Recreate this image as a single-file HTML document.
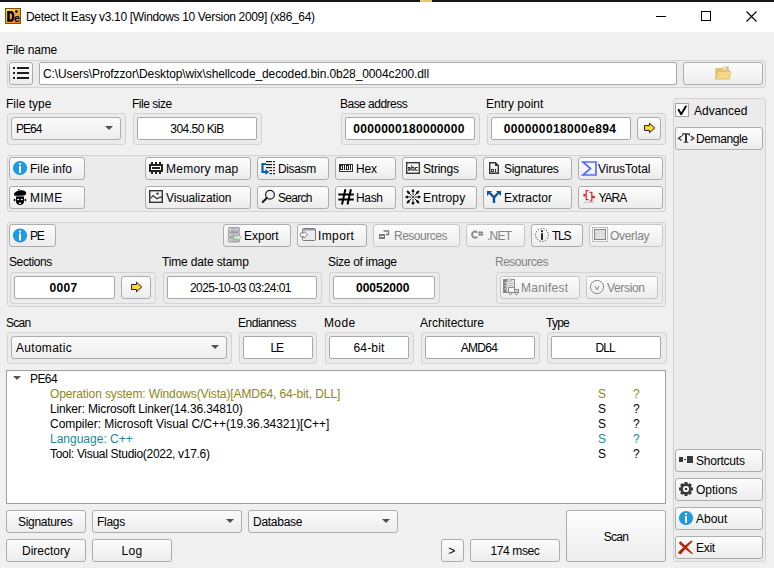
<!DOCTYPE html>
<html><head><meta charset="utf-8">
<style>
*{box-sizing:border-box;margin:0;padding:0}
html,body{width:774px;height:568px;overflow:hidden;background:#f0f0f0;font-family:"Liberation Sans",sans-serif;font-size:12px;color:#000}
.a{position:absolute}
.t{position:absolute;white-space:nowrap;line-height:14px}
.g{position:absolute;border:1px solid #d3d3d3;background:#ebebeb;border-radius:3px}
.b{position:absolute;border:1px solid #adadad;border-radius:3px;background:linear-gradient(#fdfdfd,#ececec);display:flex;align-items:center;white-space:nowrap;line-height:14px}
.c{justify-content:center}
.i{position:absolute;border:1px solid #a8a8a8;border-radius:2px;background:#fff;display:flex;align-items:center;justify-content:center;white-space:nowrap;line-height:14px}
.bold{font-weight:bold}
.dis{color:#838383}
.b.dis{border-color:#c6c6c6}
.cb{position:absolute;border:1px solid #adadad;border-radius:3px;background:linear-gradient(#fbfbfb,#ededed);display:flex;align-items:center;white-space:nowrap;line-height:14px;padding-left:4px}
.cb:after{content:"";position:absolute;right:7px;top:8px;border-left:4px solid transparent;border-right:4px solid transparent;border-top:4px solid #505050}
svg{position:absolute}
</style></head><body>
<!-- title bar -->
<div class="a" style="left:0;top:0;width:774px;height:32px;background:#fff"></div>
<div class="a" style="left:0;top:0;width:774px;height:2px;background:#161616"></div>
<div class="a" style="left:420px;top:0;width:12px;height:2px;background:#e6c868"></div>
<div class="a" style="left:5px;top:8px;width:16px;height:16px;background:linear-gradient(#f7c531,#e9862a);border:1px solid #8a5a10"></div>
<div class="t" style="left:26px;top:10px;font-size:12px;letter-spacing:-0.33px">Detect It Easy v3.10 [Windows 10 Version 2009] (x86_64)</div>
<div class="a" style="left:656px;top:16px;width:10px;height:1px;background:#000"></div>
<div class="a" style="left:701px;top:11px;width:10px;height:10px;border:1px solid #000"></div>

<!-- file name -->
<div class="t" style="left:6px;top:43px;letter-spacing:-0.19px">File name</div>
<div class="g" style="left:7px;top:60px;width:759px;height:28px"></div>
<div class="b" style="left:9px;top:62px;width:24px;height:23px"></div>
<div class="i" style="left:39px;top:62px;width:638px;height:23px;justify-content:flex-start;padding-left:3px;letter-spacing:-0.11px">C:\Users\Profzzor\Desktop\wix\shellcode_decoded.bin.0b28_0004c200.dll</div>
<div class="b" style="left:683px;top:62px;width:80px;height:23px"></div>

<!-- row 2 -->
<div class="t" style="left:6px;top:97px">File type</div>
<div class="t" style="left:132px;top:97px;letter-spacing:-0.47px">File size</div>
<div class="t" style="left:340px;top:97px;letter-spacing:-0.52px">Base address</div>
<div class="t" style="left:486px;top:97px">Entry point</div>
<div class="g" style="left:7px;top:113px;width:119px;height:32px"></div>
<div class="cb" style="left:11px;top:117px;width:110px;height:23px;letter-spacing:-1.0px">PE64</div>
<div class="g" style="left:133px;top:113px;width:129px;height:32px"></div>
<div class="i" style="left:137px;top:117px;width:120px;height:23px;letter-spacing:-0.52px">304.50 KiB</div>
<div class="g" style="left:341px;top:113px;width:139px;height:32px"></div>
<div class="i bold" style="left:345px;top:117px;width:130px;height:23px;letter-spacing:0.29px;padding-right:2px">0000000180000000</div>
<div class="g" style="left:487px;top:113px;width:179px;height:32px"></div>
<div class="i bold" style="left:491px;top:117px;width:140px;height:23px;letter-spacing:0.37px;padding-right:2px">000000018000e894</div>
<div class="b" style="left:637px;top:117px;width:24px;height:23px"></div>

<!-- right panel -->
<div class="g" style="left:673px;top:98px;width:93px;height:464px"></div>
<div class="a" style="left:675px;top:103px;width:14px;height:14px;background:#fff;border:1px solid #a4a4a4"></div>
<div class="t" style="left:694px;top:104px">Advanced</div>
<div class="b" style="left:675px;top:127px;width:88px;height:23px;padding-left:20px;letter-spacing:-0.38px">Demangle</div>
<div class="b" style="left:675px;top:449px;width:88px;height:23px;padding-left:20px;letter-spacing:-0.22px">Shortcuts</div>
<div class="b" style="left:675px;top:478px;width:88px;height:23px;padding-left:20px">Options</div>
<div class="b" style="left:675px;top:507px;width:88px;height:23px;padding-left:20px">About</div>
<div class="b" style="left:675px;top:536px;width:88px;height:23px;padding-left:20px;letter-spacing:-0.27px">Exit</div>

<!-- buttons group -->
<div class="g" style="left:7px;top:155px;width:659px;height:57px"></div>
<div class="b" style="left:9px;top:157px;width:76px;height:23px;padding-left:20px">File info</div>
<div class="b" style="left:9px;top:186px;width:76px;height:23px;padding-left:20px;letter-spacing:0.27px">MIME</div>
<div class="b" style="left:145px;top:157px;width:106px;height:23px;padding-left:20px;letter-spacing:0.25px">Memory map</div>
<div class="b" style="left:145px;top:186px;width:106px;height:23px;padding-left:20px;letter-spacing:-0.15px">Visualization</div>
<div class="b" style="left:257px;top:157px;width:72px;height:23px;padding-left:20px;letter-spacing:-0.36px">Disasm</div>
<div class="b" style="left:257px;top:186px;width:72px;height:23px;padding-left:20px;letter-spacing:-0.72px">Search</div>
<div class="b" style="left:335px;top:157px;width:61px;height:23px;padding-left:20px;letter-spacing:-0.2px">Hex</div>
<div class="b" style="left:335px;top:186px;width:61px;height:23px;padding-left:20px;letter-spacing:-0.33px">Hash</div>
<div class="b" style="left:402px;top:157px;width:75px;height:23px;padding-left:20px;letter-spacing:-0.23px">Strings</div>
<div class="b" style="left:402px;top:186px;width:75px;height:23px;padding-left:20px;letter-spacing:0.13px">Entropy</div>
<div class="b" style="left:483px;top:157px;width:89px;height:23px;padding-left:20px;letter-spacing:-0.29px">Signatures</div>
<div class="b" style="left:483px;top:186px;width:89px;height:23px;padding-left:20px">Extractor</div>
<div class="b" style="left:578px;top:157px;width:85px;height:23px;padding-left:20px;padding-left:19px">VirusTotal</div>
<div class="b" style="left:578px;top:186px;width:85px;height:23px;padding-left:20px;letter-spacing:-1.0px;padding-left:19.5px">YARA</div>

<!-- PE group -->
<div class="g" style="left:7px;top:222px;width:659px;height:85px"></div>
<div class="b" style="left:9px;top:224px;width:47px;height:23px;padding-left:20px;letter-spacing:-1.2px">PE</div>
<div class="b" style="left:223px;top:224px;width:68px;height:23px;padding-left:20px">Export</div>
<div class="b" style="left:297px;top:224px;width:70px;height:23px;padding-left:20px;letter-spacing:0.38px">Import</div>
<div class="b dis" style="left:373px;top:224px;width:87px;height:23px;padding-left:20px;letter-spacing:-0.49px">Resources</div>
<div class="b dis" style="left:466px;top:224px;width:59px;height:23px;padding-left:20px;letter-spacing:-0.77px">.NET</div>
<div class="b" style="left:531px;top:224px;width:52px;height:23px;padding-left:20px;letter-spacing:-1.3px">TLS</div>
<div class="b dis" style="left:589px;top:224px;width:74px;height:23px;padding-left:20px;letter-spacing:-0.3px">Overlay</div>
<div class="t" style="left:9px;top:255px;letter-spacing:-0.4px">Sections</div>
<div class="t" style="left:162px;top:255px;letter-spacing:-0.15px">Time date stamp</div>
<div class="t" style="left:328px;top:255px;letter-spacing:-0.31px">Size of image</div>
<div class="t dis" style="left:495px;top:255px;letter-spacing:-0.49px">Resources</div>
<div class="g" style="left:10px;top:272px;width:146px;height:32px"></div>
<div class="i bold" style="left:14px;top:276px;width:101px;height:23px;letter-spacing:0.33px;padding-right:2px">0007</div>
<div class="b" style="left:121px;top:276px;width:30px;height:23px"></div>
<div class="g" style="left:163px;top:272px;width:159px;height:32px"></div>
<div class="i" style="left:167px;top:276px;width:150px;height:23px;letter-spacing:-0.55px;padding-right:3px">2025-10-03 03:24:01</div>
<div class="g" style="left:329px;top:272px;width:111px;height:32px"></div>
<div class="i bold" style="left:333px;top:276px;width:102px;height:23px;padding-right:2.6px">00052000</div>
<div class="g" style="left:496px;top:272px;width:167px;height:32px"></div>
<div class="b dis" style="left:500px;top:276px;width:80px;height:23px;padding-left:20px;letter-spacing:0.23px">Manifest</div>
<div class="b dis" style="left:586px;top:276px;width:72px;height:23px;padding-left:20px;letter-spacing:-0.33px">Version</div>

<!-- scan row -->
<div class="t" style="left:6px;top:316px;letter-spacing:-0.73px">Scan</div>
<div class="t" style="left:238px;top:316px;letter-spacing:-0.48px">Endianness</div>
<div class="t" style="left:324px;top:316px;letter-spacing:0.37px">Mode</div>
<div class="t" style="left:420px;top:316px">Architecture</div>
<div class="t" style="left:546px;top:316px;letter-spacing:-0.75px">Type</div>
<div class="g" style="left:7px;top:332px;width:225px;height:32px"></div>
<div class="cb" style="left:11px;top:336px;width:216px;height:23px;letter-spacing:0.29px">Automatic</div>
<div class="g" style="left:239px;top:332px;width:78px;height:32px"></div>
<div class="i" style="left:243px;top:336px;width:70px;height:23px;letter-spacing:-1.2px;padding-right:2.5px">LE</div>
<div class="g" style="left:325px;top:332px;width:89px;height:32px"></div>
<div class="i" style="left:329px;top:336px;width:80px;height:23px;letter-spacing:0.16px">64-bit</div>
<div class="g" style="left:421px;top:332px;width:119px;height:32px"></div>
<div class="i" style="left:425px;top:336px;width:110px;height:23px;letter-spacing:-0.68px;padding-right:2px">AMD64</div>
<div class="g" style="left:547px;top:332px;width:120px;height:32px"></div>
<div class="i" style="left:551px;top:336px;width:110px;height:23px;letter-spacing:-0.9px;padding-right:1.8px">DLL</div>

<!-- tree -->
<div class="a" style="left:6px;top:370px;width:660px;height:134px;background:#fff;border:1px solid #a0a0a0"></div>
<div class="a" style="left:13px;top:376px;border-left:4px solid transparent;border-right:4px solid transparent;border-top:4px solid #555"></div>
<div class="t" style="left:30px;top:372px;letter-spacing:-0.6px">PE64</div>
<div class="t" style="left:50px;top:387px;color:#8f8714;letter-spacing:-0.11px">Operation system: Windows(Vista)[AMD64, 64-bit, DLL]</div>
<div class="t" style="left:50px;top:402px;letter-spacing:-0.17px">Linker: Microsoft Linker(14.36.34810)</div>
<div class="t" style="left:50px;top:417px;letter-spacing:-0.04px">Compiler: Microsoft Visual C/C++(19.36.34321)[C++]</div>
<div class="t" style="left:50px;top:432px;color:#1d8898">Language: C++</div>
<div class="t" style="left:50px;top:447px;letter-spacing:-0.3px">Tool: Visual Studio(2022, v17.6)</div>
<div class="t" style="left:598px;top:387px;color:#8f8714">S</div><div class="t" style="left:633px;top:387px;color:#8f8714">?</div>
<div class="t" style="left:598px;top:402px">S</div><div class="t" style="left:633px;top:402px">?</div>
<div class="t" style="left:598px;top:417px">S</div><div class="t" style="left:633px;top:417px">?</div>
<div class="t" style="left:598px;top:432px;color:#1d8898">S</div><div class="t" style="left:633px;top:432px;color:#1d8898">?</div>
<div class="t" style="left:598px;top:447px">S</div><div class="t" style="left:633px;top:447px">?</div>

<!-- bottom -->
<div class="b c" style="left:6px;top:510px;width:80px;height:23px;letter-spacing:-0.29px;padding-right:1.6px">Signatures</div>
<div class="b c" style="left:6px;top:539px;width:80px;height:23px">Directory</div>
<div class="cb" style="left:92px;top:510px;width:150px;height:23px;letter-spacing:-0.3px">Flags</div>
<div class="cb" style="left:248px;top:510px;width:150px;height:23px;letter-spacing:-0.27px">Database</div>
<div class="b c" style="left:92px;top:539px;width:80px;height:23px;letter-spacing:0.35px">Log</div>
<div class="b c" style="left:441px;top:539px;width:23px;height:23px;letter-spacing:-1.3px;padding-right:3px">&gt;</div>
<div class="b c" style="left:470px;top:539px;width:90px;height:23px;letter-spacing:-0.39px">174 msec</div>
<div class="b c" style="left:566px;top:510px;width:100px;height:52px;padding-top:2px;letter-spacing:-0.73px">Scan</div>

<svg width="774" height="568" viewBox="0 0 774 568" style="left:0;top:0;z-index:5">
<defs>
<linearGradient id="ag" x1="0" y1="0" x2="1" y2="1"><stop offset="0" stop-color="#fde24a"/><stop offset="1" stop-color="#f0781c"/></linearGradient>
<linearGradient id="dbg" x1="0" y1="0" x2="1" y2="0"><stop offset="0" stop-color="#d8d8d8"/><stop offset="0.4" stop-color="#b8b8b8"/><stop offset="1" stop-color="#c8c8d8"/></linearGradient>
</defs>
<!-- app icon -->
<rect x="5.5" y="8.5" width="15" height="15" fill="url(#ag)" stroke="#7a5208"/>
<path d="M7.2 11.1 H10.8 C13.6 11.1 14.4 13.6 14.4 16.4 C14.4 19.4 13.4 21.7 10.6 21.7 H7.2 Z M9.8 13.6 V19.4 H10.6 C11.6 19.4 11.9 18.2 11.9 16.4 C11.9 14.6 11.5 13.6 10.6 13.6 Z" fill="#000" fill-rule="evenodd"/>
<circle cx="16.4" cy="11.6" r="1.35" fill="#000"/>
<text x="13.9" y="21.6" font-family="Liberation Sans" font-weight="bold" font-size="10.5" fill="#000">e</text>
<!-- window controls -->
<path d="M746.5 11.5 L756.5 21.5 M756.5 11.5 L746.5 21.5" stroke="#000" stroke-width="1.1"/>
<!-- list icon -->
<g fill="#1e1e1e"><rect x="13" y="67" width="2" height="2"/><rect x="13" y="72" width="2" height="2"/><rect x="13" y="77" width="2" height="2"/>
<rect x="17" y="67" width="12" height="2"/><rect x="17" y="72" width="12" height="2"/><rect x="17" y="77" width="12" height="2"/></g>
<!-- folder -->
<path d="M715.8 68.5 H722.5 L723.5 67 H728.3 V70 H729 V78.8 H715.8 Z" fill="#e9c36a" stroke="#d8ac48" stroke-width="0.6"/>
<rect x="723.5" y="67.5" width="4.5" height="1.8" fill="#fff"/><circle cx="727" cy="68.3" r="0.8" fill="#2aa0d0"/>
<path d="M717.8 71.5 H730.8 L729.5 79 H716 Z" fill="#f4d889" stroke="#dcb556" stroke-width="0.6"/>
<!-- yellow arrows -->
<path d="M644.5 125.5 H649.5 V123.2 L654.8 128 L649.5 132.8 V130.5 H644.5 Z" fill="#ffd52b" stroke="#23233a" stroke-width="1"/>
<path d="M131.5 284.5 H136.5 V282.2 L141.8 287 L136.5 291.8 V289.5 H131.5 Z" fill="#ffd52b" stroke="#23233a" stroke-width="1"/>
<!-- info icons -->
<g><circle cx="20" cy="168" r="7.1" fill="#1c9be0"/><rect x="19" y="163" width="2" height="2" fill="#fff"/><rect x="19" y="166" width="2" height="7" fill="#fff"/></g>
<g><circle cx="20" cy="235.5" r="7.1" fill="#1c9be0"/><rect x="19" y="230.5" width="2" height="2" fill="#fff"/><rect x="19" y="233.5" width="2" height="7" fill="#fff"/></g>
<g><circle cx="686" cy="518" r="7.1" fill="#1c9be0"/><rect x="685" y="513" width="2" height="2" fill="#fff"/><rect x="685" y="516" width="2" height="7" fill="#fff"/></g>
<!-- MIME -->
<g fill="#000"><path d="M14 195 C13.8 192.3 17 190.4 20.8 190.2 C24.2 190 26.4 191.5 26.2 193.4 C26 195.4 22.5 195.9 19.8 195.9 C16.5 195.9 14.1 196 14 195 Z"/><ellipse cx="18.8" cy="189.6" rx="0.9" ry="0.6"/>
<path d="M16 196 H24 V201.5 C24 203.8 22.3 205 20 205 C17.7 205 16 203.8 16 201.5 Z"/>
<ellipse cx="14.6" cy="200" rx="0.9" ry="1.2"/><ellipse cx="25.4" cy="200" rx="0.9" ry="1.2"/></g>
<rect x="15.5" y="195.7" width="9" height="0.8" fill="#d6d6d6"/><g fill="#fff"><ellipse cx="18.3" cy="199.5" rx="1.1" ry="0.8"/><ellipse cx="21.8" cy="199.5" rx="1.1" ry="0.8"/><ellipse cx="20" cy="203.2" rx="1.3" ry="0.7"/></g>
<!-- memory map chip -->
<g fill="#222"><rect x="149" y="164" width="14" height="8"/><rect x="151" y="162" width="2" height="2"/><rect x="155" y="162" width="2" height="2"/><rect x="159" y="162" width="2" height="2"/>
<rect x="151" y="172" width="2" height="2"/><rect x="155" y="172" width="2" height="2"/><rect x="159" y="172" width="2" height="2"/></g>
<rect x="151" y="166" width="10" height="4" fill="#fff"/><rect x="152" y="167" width="8" height="2" fill="#222"/>
<!-- disasm -->
<path d="M266 164 H262.5 V172 H267" fill="none" stroke="#0d5fb0" stroke-width="2.2"/>
<path d="M265.5 169 L269.2 172 L265.5 175 Z" fill="#0d5fb0"/>
<g fill="#222"><rect x="266" y="161" width="6" height="1.2"/><rect x="266" y="164" width="6" height="1.2"/><rect x="266" y="167" width="6" height="1.2"/><rect x="269.5" y="170" width="2.5" height="1.2"/><rect x="269.5" y="173" width="2.5" height="1.2"/>
<rect x="273" y="161" width="2" height="1.2"/><rect x="273" y="164" width="2" height="1.2"/><rect x="273" y="167" width="2" height="1.2"/><rect x="273" y="170" width="2" height="1.2"/><rect x="273" y="173" width="2" height="1.2"/></g>
<!-- hex -->
<g shape-rendering="crispEdges"><rect x="339" y="164" width="14" height="8" fill="#333"/><rect x="340" y="165" width="12" height="6" fill="#fff"/>
<g fill="#222"><rect x="340" y="165" width="3" height="5"/><rect x="344" y="165" width="1" height="5"/><rect x="346" y="165" width="3" height="5"/><rect x="350" y="165" width="1" height="5"/></g>
<g fill="#fff"><rect x="341" y="166" width="1" height="3"/><rect x="347" y="166" width="1" height="3"/></g></g>
<!-- strings -->
<rect x="406.7" y="162.7" width="12.6" height="10.6" fill="#fff" stroke="#333" stroke-width="1.4"/>
<g stroke="#ddd" stroke-width="0.6"><path d="M407.5 165 H418.5 M407.5 171.2 H418.5"/></g>
<g fill="none" stroke="#222" stroke-width="1"><path d="M408 167.5 H410.2 V170.2 H408.5 V168.8 H410"/><path d="M411.8 165.3 V170.2 H414 V167.5 H411.8"/><path d="M417.6 167.5 H415.4 V170.2 H417.6"/></g>
<!-- signatures doc -->
<path d="M489.7 162.7 H495.5 L498.3 165.5 V173.3 H489.7 Z" fill="#f4f4f4" stroke="#333" stroke-width="1.4"/>
<path d="M495 162.5 V166 H498.5 Z" fill="#333"/>
<rect x="491.4" y="169.4" width="2.2" height="2.2" fill="none" stroke="#333" stroke-width="0.9"/><rect x="495" y="168.9" width="1.1" height="3.2" fill="#333"/>
<!-- virustotal -->
<path d="M596 162 H583 L590.5 168.5 L583 175 H596 Z" fill="none" stroke="#4f6ffa" stroke-width="1.7"/>
<!-- visualization -->
<rect x="149.7" y="190.7" width="12.6" height="11.6" fill="#f4f4f4" stroke="#333" stroke-width="1.4"/>
<circle cx="157.5" cy="193.6" r="1.2" fill="#333"/>
<path d="M150.5 198.5 L153 195.6 L157 198.8 L160.5 197 L162 198" fill="none" stroke="#333" stroke-width="1.1"/>
<!-- search -->
<circle cx="270" cy="194.8" r="4.4" fill="#f2f2f2" stroke="#222" stroke-width="1.2"/>
<path d="M266.8 198 L262.8 202" stroke="#222" stroke-width="2.2" stroke-linecap="round"/>
<!-- hash -->
<g stroke="#000" stroke-width="2"><path d="M338.3 194.4 H353.8 M338.3 199.6 H353.8"/><path d="M345.4 189.3 L342 204.5 M350.9 189.3 L347.5 204.5"/></g>
<!-- entropy -->
<g stroke="#666" stroke-width="1.4"><path d="M413 191 V203 M407 197 H419"/></g>
<g stroke="#111" stroke-width="0.9"><path d="M408.5 192.5 L417.5 201.5 M417.5 192.5 L408.5 201.5"/></g>
<g fill="#111"><path d="M411.4 191.8 L413 189.2 L414.6 191.8 Z"/><circle cx="413" cy="190.8" r="1.25"/>
<path d="M411.4 202.2 L413 204.8 L414.6 202.2 Z"/><circle cx="413" cy="203.2" r="1.25"/>
<path d="M407.8 195.4 L405.2 197 L407.8 198.6 Z"/><circle cx="406.8" cy="197" r="1.25"/>
<path d="M418.2 195.4 L420.8 197 L418.2 198.6 Z"/><circle cx="419.2" cy="197" r="1.25"/>
<ellipse cx="408.4" cy="192.4" rx="2.2" ry="1.2" transform="rotate(45 408.4 192.4)"/><ellipse cx="417.6" cy="192.4" rx="2.2" ry="1.2" transform="rotate(-45 417.6 192.4)"/>
<ellipse cx="408.4" cy="201.6" rx="2.2" ry="1.2" transform="rotate(-45 408.4 201.6)"/><ellipse cx="417.6" cy="201.6" rx="2.2" ry="1.2" transform="rotate(45 417.6 201.6)"/></g>
<circle cx="413" cy="197" r="2" fill="#fff"/><circle cx="413" cy="197" r="1.1" fill="#111"/>
<!-- extractor -->
<path d="M494 203 V197.5 L489.8 193 M494 197.5 L498.2 193" fill="none" stroke="#0a52a0" stroke-width="2.4"/>
<path d="M487 191 H492 L487 196 Z M501 191 H496 L501 196 Z" fill="#0a52a0"/>
<!-- yara -->
<path d="M588.5 190.6 H586.2 V194.6 H584 V196 H586.2 V199.6 H588.5 M589.5 192.4 H591.8 V196.4 H594.2 V197.6 H591.8 V201 H589.5" fill="none" stroke="#d82a2a" stroke-width="1.2"/>
<rect x="583.5" y="202.3" width="11" height="0.7" fill="#b4b4b4"/>
<!-- export -->
<g stroke="#8a8a8a" stroke-width="0.8" fill="url(#dbg)"><rect x="228.4" y="227.4" width="11" height="4.6" rx="0.8"/><rect x="228.4" y="232.4" width="11" height="4.6" rx="0.8"/><rect x="228.4" y="237.4" width="11" height="4.6" rx="0.8"/></g>
<path d="M233.5 236 H237.5 V234 L241.3 237.5 L237.5 241 V239 H233.5 Z" fill="#d8ecd8" stroke="#8aa88a" stroke-width="0.7"/>
<!-- import -->
<rect x="302.5" y="228.5" width="13" height="12" rx="1" fill="#ececec" stroke="#7a7a7a" stroke-width="1"/>
<rect x="303" y="229" width="12" height="1.5" fill="#9a9aaa"/>
<path d="M300.5 233 H304 V231.5 L307.8 234.8 L304 238 V236.5 H300.5 Z" fill="#fafafa" stroke="#7a7a7a" stroke-width="0.8"/>
<!-- resources disabled -->
<rect x="379" y="234" width="6" height="5" fill="#7a7a7a"/><rect x="380" y="236" width="4" height="1" fill="#eee"/>
<path d="M383.5 231 H388.5 V234.5 H386" fill="none" stroke="#7a7a7a" stroke-width="1.3"/>
<!-- .NET C# -->
<path d="M477.2 232.6 A2.9 3.1 0 1 0 477.2 236.6" fill="none" stroke="#8a8a8a" stroke-width="1.9"/>
<g stroke="#8a8a8a" stroke-width="1.1"><path d="M478.2 232.6 H483.2 M478.2 234.6 H483.2 M479.8 231 V236 M481.8 231 V236"/></g>
<!-- TLS -->
<circle cx="542" cy="235" r="6.4" fill="none" stroke="#333" stroke-width="1" stroke-dasharray="1.2 1.6"/>
<rect x="541" y="230.3" width="2" height="1.8" fill="#222"/><rect x="541" y="233.3" width="2" height="6.5" fill="#222"/>
<!-- overlay -->
<rect x="592.5" y="227.5" width="15" height="14" fill="#fafafa" stroke="#bdbdbd" stroke-width="1"/>
<rect x="594.5" y="229.5" width="11" height="10" fill="#d6d6d6" stroke="#8a8a8a" stroke-width="1"/>
<g stroke="#eee" stroke-width="0.5"><path d="M595 232 H605 M595 234.5 H605 M595 237 H605 M597.7 230 V239 M600.3 230 V239 M603 230 V239"/></g>
<!-- manifest -->
<rect x="503.5" y="279.5" width="11" height="13" fill="#e6e6e6" stroke="#8a8a8a" stroke-width="1"/>
<rect x="504" y="280" width="2.5" height="12" fill="#7a7a7a"/>
<g fill="#fff"><rect x="504.5" y="282.5" width="1.5" height="1"/><rect x="504.5" y="285.5" width="1.5" height="1"/><rect x="504.5" y="288.5" width="1.5" height="1"/></g>
<rect x="507.2" y="279" width="4" height="2" fill="#fff" stroke="#8a8a8a" stroke-width="0.7"/>
<g stroke="#b0b0b0" stroke-width="0.8"><path d="M508 283.5 H513 M508 285.5 H513"/></g>
<rect x="508.5" y="287.5" width="6" height="5" fill="#f8f8f8" stroke="#8a8a8a" stroke-width="1"/>
<rect x="514.5" y="289.5" width="4" height="3" fill="#dcdcdc" stroke="#8a8a8a" stroke-width="1"/>
<circle cx="510.5" cy="293.4" r="1.2" fill="#fff" stroke="#777" stroke-width="0.9"/><circle cx="516.5" cy="293.4" r="1.2" fill="#fff" stroke="#777" stroke-width="0.9"/>
<!-- version -->
<circle cx="597" cy="287" r="6.6" fill="none" stroke="#8a8a8a" stroke-width="1"/>
<path d="M595 286 L597 290 L599 286" fill="none" stroke="#8a8a8a" stroke-width="1"/>
<!-- checkbox check -->
<path d="M678.6 109.8 L681.2 114.2 L685.8 106.4" fill="none" stroke="#000" stroke-width="1.9" stroke-linecap="round" stroke-linejoin="round"/>
<!-- demangle -->
<path d="M681.5 136 L678.5 138.3 L681.5 140.5 M690.8 136 L693.8 138.3 L690.8 140.5" fill="none" stroke="#333" stroke-width="1.3"/>
<path d="M682.2 133.2 H689.8 V136 H689 L688.6 134.6 H687 V141.6 L688.4 142 V142.8 H683.6 V142 L685 141.6 V134.6 H683.4 L683 136 H682.2 Z" fill="#333"/>
<!-- shortcuts -->
<rect x="679" y="457" width="4" height="5" fill="#3a3a3a"/><rect x="684" y="459" width="2" height="1" fill="#3a3a3a"/><rect x="687" y="456" width="6" height="7" fill="#3a3a3a"/>
<!-- options gear -->
<g fill="#3a3a3a" transform="translate(686 489)">
<circle r="5.7"/>
<rect x="-1.5" y="-7" width="3" height="14"/><rect x="-1.5" y="-7" width="3" height="14" transform="rotate(45)"/><rect x="-1.5" y="-7" width="3" height="14" transform="rotate(90)"/><rect x="-1.5" y="-7" width="3" height="14" transform="rotate(135)"/>
<circle r="3.1" fill="#fff"/><circle r="1.3"/></g>
<!-- exit -->
<path d="M678.8 552.6 C682 549.5 687 544.5 691.8 541.2 C687.5 545.5 683 550.5 680.6 553.6 Z" fill="#b3290f" stroke="#b3290f" stroke-width="1.4" stroke-linejoin="round"/>
<path d="M680.2 541.8 C684 545 688.5 549.5 692.3 553.6 C688 550.8 683.6 547 679.8 543.6 Z" fill="#b3290f" stroke="#b3290f" stroke-width="1.2" stroke-linejoin="round"/>
</svg>
</body></html>
